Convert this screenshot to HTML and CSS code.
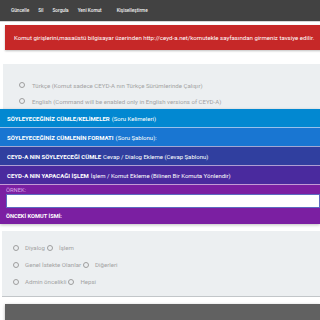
FILE: index.html
```html
<!DOCTYPE html>
<html lang="tr">
<head>
  <meta charset="UTF-8" />
  <meta name="viewport" content="width=device-width, initial-scale=1.0"/>
  <title>CEYD-A Komut Ekle</title>
  <link rel="stylesheet" href="styles.css">
</head>
<body>
  <nav class="navbar">
    <a href="#">Güncelle</a>
    <a href="#">Sil</a>
    <a href="#">Sorgula</a>
    <a href="#">Yeni Komut</a>
    <a href="#" class="wide">Kişiselleştirme</a>
  </nav>

  <div class="alert">Komut girişlerini,masaüstü bilgisayar üzerinden http://ceyd-a.net/komutekle sayfasından girmeniz tavsiye edilir.</div>

  <section class="panel lang-panel">
    <label class="radio-row"><span class="radio"></span>Türkçe (Komut sadece CEYD-A nın Türkçe Sürümlerinde Çalışır)</label>
    <label class="radio-row"><span class="radio"></span>English (Command will be enabled only in English versions of CEYD-A)</label>
  </section>

  <div class="bars">
    <div class="bar bar-1"><b>SÖYLEYECEĞİNİZ CÜMLE/KELİMELER</b> (Soru Kelimeleri)</div>
    <div class="bar bar-2"><b>SÖYLEYECEĞİNİZ CÜMLENİN FORMATI</b> (Soru Şablonu):</div>
    <div class="bar bar-3"><b>CEYD-A NIN SÖYLEYECEĞİ CÜMLE</b> Cevap / Dialog Ekleme (Cevap Şablonu)</div>
    <div class="bar bar-4"><b>CEYD-A NIN YAPACAĞI İŞLEM</b> İşlem / Komut Ekleme (Bilinen Bir Komuta Yönlendir)</div>
    <div class="bar bar-5">
      <div class="small-label">ÖRNEK:</div>
      <input type="text" class="example-input">
      <div class="prev-label">ÖNCEKİ KOMUT İSMİ:</div>
    </div>
  </div>

  <section class="panel filter-panel">
    <div class="radio-row"><span class="radio"></span>Diyalog<span class="radio"></span>İşlem</div>
    <div class="radio-row"><span class="radio"></span>Genel İstekte Olanlar<span class="radio"></span>Diğerleri</div>
    <div class="radio-row"><span class="radio"></span>Admin öncelikli<span class="radio"></span>Hepsi</div>
  </section>

  <div class="footer-bar"></div>
</body>
</html>
```

FILE: styles.css
```css
* { margin:0; padding:0; box-sizing:border-box; }
body { font-family:Roboto,'Liberation Sans',sans-serif; background:white; overflow:hidden; }

.navbar { background:#424242; height:22px; display:flex; align-items:center; padding-left:11px; gap:9px; border-bottom:1px solid #d6d6d6; }
.navbar a { color:#f2f2f2; text-decoration:none; font-size:4.7px; font-weight:500; }
.navbar a.wide { margin-left:6px; }

.alert { background:#c62828; color:white; margin:3px -4px 0 5px; height:25px; display:flex; align-items:center; padding-left:9px; font-size:6.1px; white-space:nowrap; box-shadow:0 1px 2px rgba(0,0,0,0.25); }

.panel { background:#eceff1; margin-left:3px; }
.lang-panel { margin-top:14px; padding:13px 0 0 16px; height:45px; }
.radio-row { display:flex; align-items:center; height:16px; font-size:6.1px; color:#a3a3a3; white-space:nowrap; }
.radio { width:6px; height:6px; border:1px solid #9e9e9e; border-radius:50%; margin-right:6px; flex-shrink:0; }
.lang-panel .radio { margin-right:7px; }

.bars { box-shadow:0 1px 3px rgba(0,0,0,0.25); }
.bar { color:white; height:18px; display:flex; align-items:center; padding-left:7px; font-size:6px; white-space:nowrap; }
.bar + .bar { border-top:1px solid rgba(255,255,255,0.55); height:19px; }
.bar b { font-weight:700; margin-right:2px; }
.bar-1 { background:#0288d1; }
.bar-2 { background:#1976d2; }
.bar-3 { background:#303f9f; }
.bar-4 { background:#4a2a9e; }
.bar.bar-5 { background:#7b1fa2; height:40px; display:block; padding:2px 0 0 6px; }
.small-label { font-size:5.8px; color:#d7a8e6; height:7px; line-height:7px; }
.example-input { display:block; width:100%; height:14px; border:1px solid #5c6bc0; background:white; outline:none; }
.prev-label { font-size:5.7px; font-weight:700; margin-top:4px; line-height:9px; }

.filter-panel { margin-top:7px; margin-left:2px; padding:8px 0 6px 11px; border-bottom:1px solid #c2c6c9; }
.filter-panel .radio-row { height:17px; }
.filter-panel .radio { margin-left:2px; }
.filter-panel .radio:first-child { margin-left:0; }

.footer-bar { background:#616161; margin:7px 0 0 5px; height:20px; box-shadow:0 1px 3px rgba(0,0,0,0.3); }
```
